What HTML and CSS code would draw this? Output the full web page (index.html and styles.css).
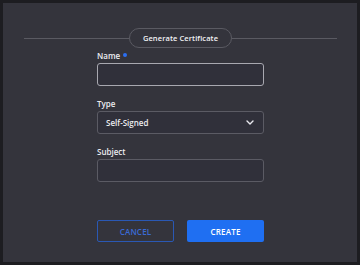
FILE: index.html
```html
<!DOCTYPE html>
<html>
<head>
<meta charset="utf-8">
<link rel="stylesheet" href="styles.css">
</head>
<body>
<div class="dialog">
  <div class="header">
    <span class="line"></span>
    <span class="pill">Generate Certificate</span>
    <span class="line"></span>
  </div>
  <form class="form">
    <div class="field">
      <label class="label">Name <span class="req"></span></label>
      <div class="input focused"></div>
    </div>
    <div class="field">
      <label class="label">Type</label>
      <div class="input select">
        <span>Self-Signed</span>
        <svg width="8" height="5" viewBox="0 0 8 5"><path d="M1 1 L4 4 L7 1" fill="none" stroke="#e8e8ee" stroke-width="1.4" stroke-linecap="round" stroke-linejoin="round"/></svg>
      </div>
    </div>
    <div class="field">
      <label class="label">Subject</label>
      <div class="input"></div>
    </div>
    <div class="buttons">
      <button type="button" class="btn cancel">CANCEL</button>
      <button type="button" class="btn create">CREATE</button>
    </div>
  </form>
</div>
</body>
</html>
```
FILE: styles.css
```css
html, body {
  margin: 0;
  padding: 0;
}
body {
  background: #1d1d21;
  width: 360px;
  height: 265px;
  padding: 3px 3px 0 3px;
  box-sizing: border-box;
  font-family: "Open Sans", "Liberation Sans", sans-serif;
  overflow: hidden;
}
.dialog {
  background: #34343c;
  width: 354px;
  height: 259px;
  box-sizing: border-box;
  padding: 25px 20px 0 21px;
}
.header {
  display: flex;
  align-items: center;
  height: 20px;
}
.line {
  flex: 1;
  height: 1px;
  background: #5a5a62;
}
.pill {
  height: 20px;
  box-sizing: border-box;
  border: 1px solid #5a5a62;
  border-radius: 10px;
  padding: 0 13px;
  display: flex;
  align-items: center;
  font-size: 7.5px;
  font-weight: 600;
  color: #f2f2f5;
  letter-spacing: 0.1px;
}
.form {
  width: 167px;
  margin: 4px auto 0;
  display: flex;
  flex-direction: column;
}
.field {
  display: flex;
  flex-direction: column;
  margin-bottom: 14px;
}
.label {
  height: 8px;
  line-height: 8px;
  font-size: 8px;
  font-weight: 600;
  color: #ececf0;
  margin-bottom: 3px;
  display: flex;
  align-items: center;
}
.req {
  width: 4px;
  height: 4px;
  border-radius: 50%;
  background: #2b6ef2;
  margin-left: 3px;
  margin-top: -3px;
}
.input {
  height: 23px;
  box-sizing: border-box;
  border: 1px solid #5b5b64;
  border-radius: 3px;
  background: #30303a;
}
.input.focused {
  border: 1.5px solid #a8a8b0;
}
.select {
  display: flex;
  align-items: center;
  justify-content: space-between;
  padding: 0 9px 0 8px;
  font-size: 8px;
  font-weight: 600;
  color: #ececf0;
}
.buttons {
  display: flex;
  justify-content: space-between;
  margin-top: 24px;
}
.btn {
  width: 77px;
  height: 22px;
  border-radius: 2px;
  font-family: "Open Sans", "Liberation Sans", sans-serif;
  font-size: 8px;
  font-weight: 600;
  padding: 0;
  letter-spacing: 0.2px;
}
.cancel {
  background: transparent;
  border: 1.5px solid #2a58b4;
  color: #3a6ad4;
}
.create {
  background: #1f6ff2;
  border: none;
  color: #ffffff;
}
```
